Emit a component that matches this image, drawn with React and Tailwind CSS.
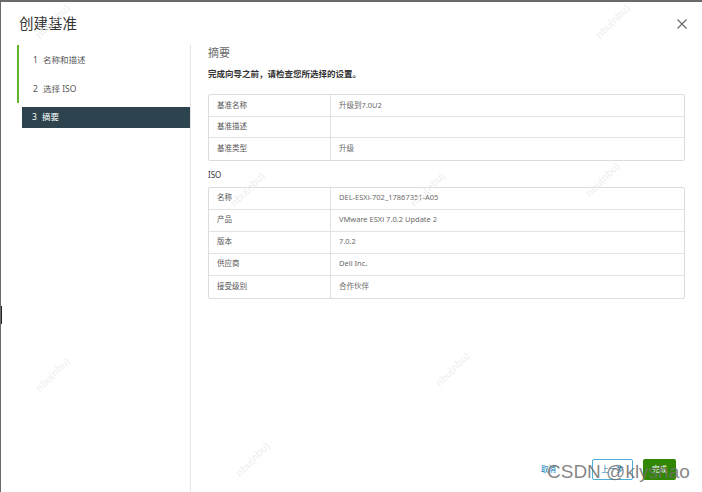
import React from "react";

const FONT = { fontFamily: '"Noto Sans", "Noto Sans CJK SC", sans-serif' };

function Table({ rows, h }) {
  return (
    <div className="border border-[#dcdcdc] rounded-[2px]">
      {rows.map(([k, v], i) => (
        <div
          key={i}
          className={`flex items-center text-[7.5px] ${i < rows.length - 1 ? "border-b border-[#e2e2e2]" : ""} ${h}`}
        >
          <div className="w-[122px] h-full flex items-center pl-[8px] text-[#565656] border-r border-[#e2e2e2]">
            {k}
          </div>
          <div className="flex-1 pl-[8px] text-[#6a6a6a]">{v}</div>
        </div>
      ))}
    </div>
  );
}

const marks = [
  [30, -8], [590, -8],
  [225, 160], [405, 160], [580, 150],
  [30, 345], [430, 340], [230, 430],
];

export default function App() {
  return (
    <div
      className="relative w-[702px] h-[492px] bg-white border-t-2 border-l border-[#6a6a6a] flex flex-col overflow-hidden"
      style={FONT}
    >
      <div className="h-[43px] flex items-center justify-between pl-[18px] pr-[14px] shrink-0">
        <div className="text-[14.5px] text-[#333]">创建基准</div>
        <svg width="12" height="12" viewBox="0 0 12 12" className="mt-[1px]">
          <path d="M1.5 1.5L10.5 10.5M10.5 1.5L1.5 10.5" stroke="#666" strokeWidth="1.1" />
        </svg>
      </div>
      <div className="flex flex-1 min-h-0">
        <div className="w-[190px] pl-[16px] border-r border-[#e6e6e6] shrink-0">
          <div className="border-l-2 border-[#62b52a]">
            <div className="h-[29px] flex items-center pl-[14px] pt-[1px] text-[8.5px] text-[#565656]">
              <span className="w-[10px]">1</span>名称和描述
            </div>
            <div className="h-[29px] flex items-center pl-[14px] pt-[1px] text-[8.5px] text-[#565656]">
              <span className="w-[10px]">2</span>选择 ISO
            </div>
          </div>
          <div className="mt-[4px] ml-[5px] h-[21px] bg-[#2d434e] flex items-center pl-[10px] text-[8.5px] text-white">
            <span className="w-[10px]">3</span>摘要
          </div>
        </div>
        <div className="flex-1 flex flex-col pl-[17px] pr-[17px]">
          <div className="flex-1">
            <div className="text-[11px] text-[#6a6a6a] leading-[14px] pt-[1px]">摘要</div>
            <div className="mt-[8px] text-[8.5px] font-bold text-[#333] leading-[12px]">
              完成向导之前，请检查您所选择的设置。
            </div>
            <div className="mt-[14px]">
              <Table
                h="h-[21.5px]"
                rows={[
                  ["基准名称", "升级到7.0U2"],
                  ["基准描述", ""],
                  ["基准类型", "升级"],
                ]}
              />
            </div>
            <div className="mt-[8px] text-[8px] text-[#333] leading-[12px]">ISO</div>
            <div className="mt-[6px]">
              <Table
                h="h-[22px]"
                rows={[
                  ["名称", "DEL-ESXi-702_17867351-A05"],
                  ["产品", "VMware ESXi 7.0.2 Update 2"],
                  ["版本", "7.0.2"],
                  ["供应商", "Dell Inc."],
                  ["接受级别", "合作伙伴"],
                ]}
              />
            </div>
          </div>
          <div className="flex items-center justify-end gap-[10px] pb-[12px] pr-[9px]">
            <button className="text-[7.5px] text-[#0079b8] mr-[26px]">取消</button>
            <button className="w-[41px] h-[21px] border border-[#49afd9] rounded-[2px] text-[7.5px] text-[#0079b8]">
              上一步
            </button>
            <button className="w-[33px] h-[21px] bg-[#318700] rounded-[2px] text-[7.5px] text-white">
              完成
            </button>
          </div>
        </div>
      </div>
      {marks.map(([x, y], i) => (
        <div
          key={i}
          className="absolute text-[10px] text-[#eeeeee] -rotate-45 pointer-events-none"
          style={{ left: x, top: y + 20 }}
        >
          nbu(nbu)
        </div>
      ))}
      <div className="absolute left-0 top-[304px] w-[1px] h-[18px] bg-[#222]" />
      <div
        className="absolute left-[546px] top-[456px] text-[19px] text-[#6f6f6f]/85 pointer-events-none"
        style={{ fontFamily: '"Liberation Sans", sans-serif' }}
      >
        CSDN @klyshao
      </div>
    </div>
  );
}
